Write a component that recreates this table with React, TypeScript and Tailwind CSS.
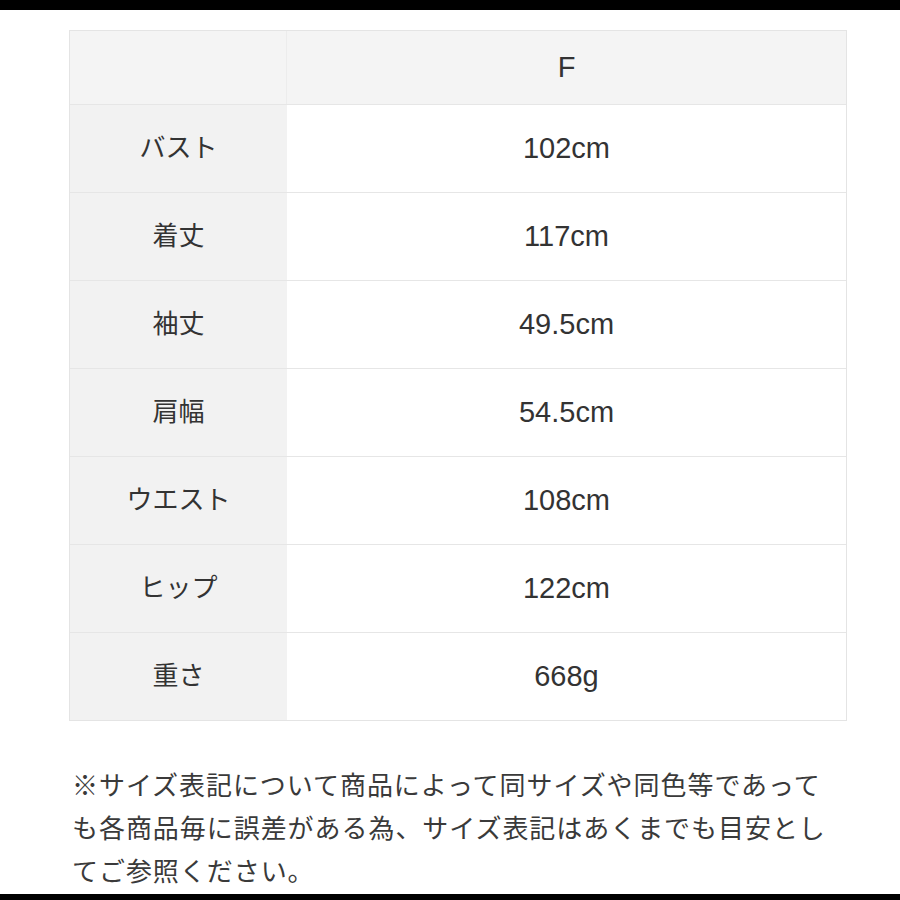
import React from "react";

const rows: [string, string][] = [
  ["バスト", "102cm"],
  ["着丈", "117cm"],
  ["袖丈", "49.5cm"],
  ["肩幅", "54.5cm"],
  ["ウエスト", "108cm"],
  ["ヒップ", "122cm"],
  ["重さ", "668g"],
];

export default function App() {
  return (
    <div
      className="w-[900px] h-[900px] bg-white flex flex-col text-[#333333]"
      style={{ fontFamily: '"Liberation Sans", "Noto Sans CJK JP", sans-serif' }}
    >
      <div className="h-[10px] bg-black shrink-0" />
      <div className="pt-[20px] pl-[69px]">
        <div className="w-[778px] grid grid-cols-[217px_1fr] border border-[#e4e4e4] bg-[#f3f3f3]">
          <div className="h-[73px] bg-[#f4f4f4] border-r border-[#ececec]" />
          <div className="h-[73px] bg-[#f4f4f4] flex items-center justify-center text-[29px]">F</div>
          {rows.map(([k, v]) => (
            <React.Fragment key={k}>
              <div className="h-[88px] border-t border-[#e6e6e6] bg-[#f2f2f2] flex items-center justify-center text-[26px]">
                {k}
              </div>
              <div className="h-[88px] border-t border-[#e6e6e6] bg-white flex items-center justify-center text-[29px]">
                {v}
              </div>
            </React.Fragment>
          ))}
        </div>
      </div>
      <div className="pl-[72px] mt-[44px] text-[26px] leading-[43px] tracking-[0.95px] text-[#3a3a3a]">
        ※サイズ表記について商品によって同サイズや同色等であって
        <br />
        も各商品毎に誤差がある為、サイズ表記はあくまでも目安とし
        <br />
        てご参照ください。
      </div>
      <div className="flex-1" />
      <div className="h-[7px] bg-black shrink-0" />
    </div>
  );
}
